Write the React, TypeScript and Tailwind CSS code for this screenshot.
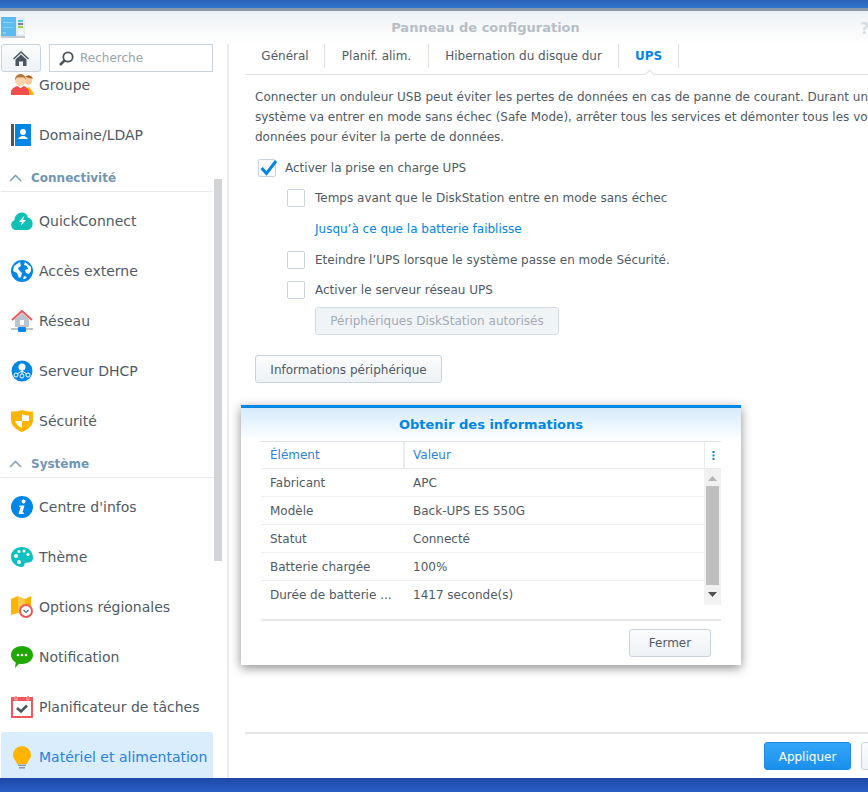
import React from 'react';

const FONT = "font-['DejaVu_Sans',sans-serif]";

const GroupIcon = () => (
    <svg width="23" height="22" viewBox="0 0 23 22">
        <circle cx="17.500" cy="7" r="3.500" fill="#fcc79a" />
        <path d="M14 3a4.500 4.500 0 0 1 8 2l-4-1z" fill="#a8641f" />
        <path d="M14 21v-5l4-3 4 5 1 3z" fill="#ffb400" />
        <circle cx="9.500" cy="6.500" r="5.500" fill="#fdd4ad" />
        <path d="M4 6c0-8 11-8 11 0l-2-2.500H6z" fill="#b5793f" />
        <path d="M0 21v-4c1-3 4-4 6-5l3.500 2 3.500-2c2 1 4 2 5 5v4z" fill="#f04d4d" />
    </svg>
);

const DomainIcon = () => (
    <svg width="22" height="22" viewBox="0 0 22 22">
        <rect x="0" y="0" width="3" height="22" fill="#4a5560" />
        <rect x="4" y="0" width="16" height="22" fill="#0086e5" />
        <circle cx="12" cy="8" r="3" fill="#fff" />
        <path d="M7 15c1-2 3-2.500 3.500-3h3c.5.5 2.500 1 3.500 3z" fill="#fff" />
    </svg>
);

const QuickConnectIcon = () => (
    <svg width="22" height="19" viewBox="0 0 22 19">
        <path d="M5 18a5 5 0 0 1-1.500-9.700C3 3 10-2 15 2c1.300 1 1.800 2.500 1.800 3.500A6.500 6.500 0 0 1 17 18z" fill="#0fc0b5" />
        <path d="M13.500 3.500l-5.500 6.500h3l-1.500 4 5.500-6h-3z" fill="#fff" />
    </svg>
);

const GlobeIcon = () => (
    <svg width="22" height="22" viewBox="0 0 22 22">
        <circle cx="11" cy="11" r="11" fill="#0086e5" />
        <path d="M9 2L3 6l-1 5 4 2 2 5 2-1 1-4-3-3-1-2 3-2z" fill="#fff" />
        <path d="M14 2l-1 3 3 1 1 3-3 1 1 3 3 1 2-3V7zM13 16l-1 3 2 0 2-2z" fill="#fff" />
    </svg>
);

const NetworkIcon = () => (
    <svg width="22" height="22" viewBox="0 0 22 22">
        <path d="M4 9l7-6 7 6v8H4z" fill="#b9c4cf" />
        <path d="M1 10l10-9 10 9" fill="none" stroke="#f0565a" strokeWidth="2" />
        <rect x="9" y="10" width="4" height="5" fill="#fff" />
        <rect x="0" y="18" width="22" height="2" fill="#b9c4cf" />
        <rect x="7" y="17" width="8" height="5" rx="1" fill="#0086e5" />
    </svg>
);

const DhcpIcon = () => (
    <svg width="22" height="22" viewBox="0 0 22 22">
        <circle cx="11" cy="11" r="10.500" fill="#0086e5" />
        <circle cx="11" cy="7" r="3.500" fill="#fff" />
        <path d="M11 9v5M11 11l-5 3M11 11l5 3" stroke="#fff" fill="none" />
        <circle cx="5" cy="15" r="2" fill="#0086e5" stroke="#fff" />
        <circle cx="11" cy="16" r="2" fill="#0086e5" stroke="#fff" />
        <circle cx="17" cy="15" r="2" fill="#0086e5" stroke="#fff" />
    </svg>
);

const ShieldIcon = () => (
    <svg width="22" height="22" viewBox="0 0 22 22">
        <path d="M0 1.500c4 0 8 0 11-1.500 3 1.500 7 1.500 11 1.500V10c0 6-6 10-11 12C6 20 0 16 0 10z" fill="#ffb400" />
        <path d="M11 4c2 1 4 1.500 7 1.500V11h-7zM4 11h7v7c-3-1.500-6-3.500-7-7z" fill="#fff" />
    </svg>
);

const InfoIcon = () => (
    <svg width="22" height="22" viewBox="0 0 22 22">
        <circle cx="11" cy="11" r="11" fill="#0086e5" />
        <circle cx="12.500" cy="5.500" r="2" fill="#fff" />
        <path d="M8.500 9.500h5l-2 7h1.500l-.5 1.500H7.500l2-7H8z" fill="#fff" />
    </svg>
);

const ThemeIcon = () => (
    <svg width="22" height="20" viewBox="0 0 22 20">
        <path d="M11 0C4 0 0 4.500 0 10s5 10 11 10c3 0 2-3 3-4s8 1 8-5C22 5 18 0 11 0z" fill="#0fc0c0" />
        <circle cx="5" cy="9" r="2" fill="#fff" />
        <circle cx="8" cy="4.500" r="1.500" fill="#fff" />
        <circle cx="13" cy="4" r="1.500" fill="#fff" />
        <circle cx="17" cy="7.500" r="1.500" fill="#fff" />
        <circle cx="8" cy="15" r="2" fill="#fff" />
    </svg>
);

const RegionIcon = () => (
    <svg width="22" height="22" viewBox="0 0 22 22">
        <path d="M0 3l7-3v17l-7 2z" fill="#ffb400" />
        <path d="M7 0l7 3v13l-7 1z" fill="#ffc94d" />
        <path d="M14 3l6-3v12h-6z" fill="#ffb400" />
        <circle cx="15" cy="15" r="6" fill="#fff" stroke="#f0565a" strokeWidth="2" />
        <path d="M12.500 14l2.500 2.500 2.500-2.500" fill="none" stroke="#5a6a7a" strokeWidth="1.200" />
    </svg>
);

const ChatIcon = () => (
    <svg width="22" height="22" viewBox="0 0 22 22">
        <path d="M11 0c6 0 11 3.800 11 9s-5 9-11 9c-1 0-2 0-3-.3L4 22l.7-5.500C2 15 0 12 0 9c0-5.200 5-9 11-9z" fill="#1ea800" />
        <circle cx="7" cy="9" r="1.300" fill="#fff" />
        <circle cx="11" cy="9" r="1.300" fill="#fff" />
        <circle cx="15" cy="9" r="1.300" fill="#fff" />
    </svg>
);

const TaskIcon = () => (
    <svg width="22" height="22" viewBox="0 0 22 22">
        <rect x="0" y="1" width="22" height="21" fill="#f0565a" />
        <rect x="2" y="5" width="18" height="15" fill="#fff" />
        <rect x="4" y="0" width="2" height="4" fill="#f0565a" stroke="#fff" strokeWidth=".5" />
        <rect x="16" y="0" width="2" height="4" fill="#f0565a" stroke="#fff" strokeWidth=".5" />
        <path d="M6 12l4 3.500 6-6" fill="none" stroke="#4a5560" strokeWidth="2.500" />
    </svg>
);

const BulbIcon = () => (
    <svg width="18" height="23" viewBox="0 0 18 23">
        <path d="M9 0a9 9 0 0 1 9 9c0 4-3 5-4 9H4C3 14 0 13 0 9a9 9 0 0 1 9-9z" fill="#ffb400" />
        <rect x="5" y="18.500" width="8" height="1.500" fill="#8a96a2" />
        <rect x="6" y="21" width="6" height="1.500" fill="#8a96a2" />
    </svg>
);

const Chevron = () => (
    <svg width="13" height="8" viewBox="0 0 13 8" className="ml-[8px] mr-[9px]">
        <path d="M1 7l5.500-5.500L12 7" fill="none" stroke="#7ea3c0" strokeWidth="1.600" />
    </svg>
);

const Row = ({ icon, label, active = false }: { icon: React.ReactNode; label: string; active?: boolean }) => (
    <div className={`flex items-center h-[50px] w-[212px] ml-px rounded-[3px] text-[14px] ${active ? 'bg-[#d9edfd] text-[#2b7fe0]' : 'text-[#505a64]'}`}>
        <span className="w-[38px] shrink-0 flex items-center justify-center pl-[4px]">{icon}</span>
        <span className="whitespace-nowrap pt-px">{label}</span>
    </div>
);

const Section = ({ label }: { label: string }) => (
    <div className="flex items-center h-[32px] w-[212px] ml-px mb-[4px] pt-[5px] border-b border-[#e8ebee] text-[#7195b3] text-[12px] font-bold">
        <Chevron />
        <span>{label}</span>
    </div>
);

const Checkbox = ({ checked = false }: { checked?: boolean }) => (
    <span className="relative w-[18px] h-[18px] shrink-0 border border-[#c8d3de] rounded-[2px] bg-white">
        {checked && (
            <svg width="20" height="18" viewBox="0 0 20 18" className="absolute left-px top-[-1px]">
                <path d="M1.500 9l5 5.500L16 2" fill="none" stroke="#0086e5" strokeWidth="3" />
            </svg>
        )}
    </span>
);

const tabs = [
    { label: 'Général', w: 'w-[80px] pl-px' },
    { label: 'Planif. alim.', w: 'w-[104px]' },
    { label: 'Hibernation du disque dur', w: 'w-[190px]' },
    { label: 'UPS', w: 'w-[60px]', active: true },
];

const rows = [
    ['Fabricant', 'APC'],
    ['Modèle', 'Back-UPS ES 550G'],
    ['Statut', 'Connecté'],
    ['Batterie chargée', '100%'],
    ['Durée de batterie ...', '1417 seconde(s)'],
];

export default function App() {
    return (
        <div className={`relative w-[868px] h-[792px] overflow-hidden flex flex-col bg-white text-[12px] ${FONT}`}>
            <div className="h-[8px] shrink-0 bg-gradient-to-b from-[#2a62b8] to-[#3175cc]" />
            <div className="h-[3px] shrink-0 bg-[#8a97a8]" />

            {/* Title bar */}
            <div className="relative h-[33px] shrink-0 bg-gradient-to-b from-[#eef1f4] to-white flex items-center justify-center">
                <svg width="24" height="21" viewBox="0 0 24 21" className="absolute left-px top-[6px]">
                    <rect x="0" y="0" width="15" height="19" fill="#5cbcf0" />
                    <rect x="15" y="0" width="9" height="19" fill="#e6ebef" />
                    <rect x="0" y="19" width="24" height="2" fill="#c3ccd4" />
                    <rect x="2" y="5" width="10" height="1" fill="#8fd2f5" />
                    <rect x="2" y="10" width="10" height="1" fill="#8fd2f5" />
                    <rect x="2" y="15" width="3" height="2" fill="#8fd2f5" />
                    <rect x="17" y="3" width="5" height="2" fill="#5ac8e0" />
                    <rect x="17" y="6" width="5" height="2" fill="#7b858f" />
                    <rect x="17" y="9" width="5" height="2" fill="#9ccc55" />
                    <circle cx="20" cy="15" r="3" fill="#f8fafb" />
                </svg>
                <span className="font-bold text-[13px] text-[#b7bec6] ml-[103px]">Panneau de configuration</span>
                <span className="absolute right-[-1px] top-[7px] font-bold text-[15px] text-[#d8dde2]">?</span>
            </div>

            {/* Main */}
            <div className="flex flex-1 min-h-0">
                {/* Sidebar */}
                <aside className="relative w-[229px] shrink-0 border-r-2 border-[#e8eaec] flex flex-col overflow-hidden">
                    <div className="flex h-[28px] shrink-0 ml-px gap-[8px]">
                        <div className="w-[40px] h-[28px] border border-[#c8d3de] rounded-[3px] bg-gradient-to-b from-[#fbfcfd] to-[#eef2f6] flex items-center justify-center">
                            <svg width="16" height="15" viewBox="0 0 16 15">
                                <path d="M8 0L0 7.500l1 1L8 2l7 6.500 1-1z" fill="#4a5560" />
                                <path d="M2.500 8.500L8 3.500l5.500 5V15H10v-4.500H6V15H2.500z" fill="#4a5560" />
                            </svg>
                        </div>
                        <div className="w-[164px] h-[28px] border border-[#c8d3de] flex items-center pl-[9px] gap-[6px] text-[#99a3ae]">
                            <svg width="15" height="15" viewBox="0 0 15 15">
                                <circle cx="9" cy="6" r="4.700" fill="none" stroke="#4a5560" strokeWidth="1.800" />
                                <path d="M5.500 9.500L1 14" stroke="#4a5560" strokeWidth="2.500" />
                            </svg>
                            <span>Recherche</span>
                        </div>
                    </div>
                    <div className="flex-1 min-h-0 overflow-hidden">
                        <div className="-mt-[12px]">
                            <Row icon={<GroupIcon />} label="Groupe" />
                            <Row icon={<DomainIcon />} label="Domaine/LDAP" />
                            <Section label="Connectivité" />
                            <Row icon={<QuickConnectIcon />} label="QuickConnect" />
                            <Row icon={<GlobeIcon />} label="Accès externe" />
                            <Row icon={<NetworkIcon />} label="Réseau" />
                            <Row icon={<DhcpIcon />} label="Serveur DHCP" />
                            <Row icon={<ShieldIcon />} label="Sécurité" />
                            <Section label="Système" />
                            <Row icon={<InfoIcon />} label="Centre d'infos" />
                            <Row icon={<ThemeIcon />} label="Thème" />
                            <Row icon={<RegionIcon />} label="Options régionales" />
                            <Row icon={<ChatIcon />} label="Notification" />
                            <Row icon={<TaskIcon />} label="Planificateur de tâches" />
                            <Row icon={<BulbIcon />} label="Matériel et alimentation" active />
                        </div>
                    </div>
                    {/* Scrollbar thumb */}
                    <div className="absolute left-[214px] top-[135px] w-[8px] h-[382px] bg-[#d2d4d7]" />
                </aside>

                {/* Content */}
                <main className="flex-1 min-w-0 flex flex-col pl-[16px] overflow-hidden text-[#505a64]">
                    <div className="relative flex h-[31px] shrink-0 border-b border-[#dde2e7]">
                        {tabs.map(tab => (
                            <div
                                key={tab.label}
                                className={`h-[24px] flex items-center justify-center border-r border-[#dde2e7] whitespace-nowrap ${tab.w} ${tab.active ? 'text-[#0086e5] font-bold' : ''}`}
                            >
                                {tab.label}
                            </div>
                        ))}
                        <span className="absolute left-[401px] bottom-[-4px] w-[7px] h-[7px] rotate-45 bg-white border-l border-t border-[#dde2e7]" />
                    </div>

                    <div className="flex-1 min-h-0 pl-[10px] pt-[12px]">
                        <p className="leading-[20px] whitespace-nowrap">Connecter un onduleur USB peut éviter les pertes de données en cas de panne de courant. Durant une panne</p>
                        <p className="leading-[20px] whitespace-nowrap">système va entrer en mode sans échec (Safe Mode), arrêter tous les services et démonter tous les volumes de</p>
                        <p className="leading-[20px] whitespace-nowrap">données pour éviter la perte de données.</p>

                        <div className="flex items-center gap-[9px] ml-[3px] mt-[11px] h-[20px]">
                            <Checkbox checked />
                            <span>Activer la prise en charge UPS</span>
                        </div>
                        <div className="flex items-center gap-[10px] ml-[32px] mt-[10px] h-[20px]">
                            <Checkbox />
                            <span>Temps avant que le DiskStation entre en mode sans échec</span>
                        </div>
                        <div className="ml-[60px] mt-[11px] h-[20px] leading-[20px] text-[#0086e5]">Jusqu’à ce que la batterie faiblisse</div>
                        <div className="flex items-center gap-[10px] ml-[32px] mt-[11px] h-[20px]">
                            <Checkbox />
                            <span>Eteindre l’UPS lorsque le système passe en mode Sécurité.</span>
                        </div>
                        <div className="flex items-center gap-[10px] ml-[32px] mt-[10px] h-[20px]">
                            <Checkbox />
                            <span>Activer le serveur réseau UPS</span>
                        </div>
                        <button className="block ml-[60px] mt-[7px] w-[244px] h-[28px] border border-[#d5dce3] rounded-[3px] bg-[#f1f4f7] text-[#a3abb4]">
                            Périphériques DiskStation autorisés
                        </button>
                        <button className="block mt-[20px] pt-px w-[187px] h-[28px] border border-[#c8d3de] rounded-[3px] bg-gradient-to-b from-[#fbfcfd] to-[#eef2f6]">
                            Informations périphérique
                        </button>
                    </div>

                    <div className="h-[46px] shrink-0 border-t-2 border-[#e4e6e8] flex items-start pt-[8px] pl-[519px] gap-[10px]">
                        <button className="w-[87px] h-[28px] pt-px shrink-0 rounded-[3px] border border-[#1a8ce0] bg-gradient-to-b from-[#33a6fb] to-[#1a8fec] text-white">
                            Appliquer
                        </button>
                        <button className="w-[87px] h-[28px] shrink-0 rounded-[3px] border border-[#c8d3de] bg-gradient-to-b from-[#fbfcfd] to-[#eef2f6]" />
                    </div>
                </main>
            </div>

            <div className="h-[14px] shrink-0 bg-gradient-to-b from-[#1d48a8] to-[#2a5ec4]" />

            {/* Dialog */}
            <div className="absolute left-[241px] top-[405px] w-[500px] h-[260px] bg-white border-t-[3px] border-[#0086e5] shadow-[0_3px_10px_rgba(0,0,0,0.45)] text-[#505a64] flex flex-col">
                <div className="h-[33px] shrink-0 bg-gradient-to-b from-[#d5ebfb] to-white flex items-center justify-center font-bold text-[13px] text-[#0086e5]">
                    Obtenir des informations
                </div>
                <div className="mx-[20px] border-t border-[#dde2e7]">
                    <div className="flex h-[27px] border-b border-[#e8ebee] text-[#2b7fe0]">
                        <div className="w-[144px] flex items-center pl-[9px] border-r-2 border-[#e8ebee]">Élément</div>
                        <div className="w-[300px] flex items-center pl-[8px] border-r border-[#e8ebee]">Valeur</div>
                        <div className="flex-1 flex items-center justify-center">
                            <svg width="3" height="9" viewBox="0 0 3 9">
                                <rect x="0.500" y="0" width="2" height="2" fill="#0086e5" />
                                <rect x="0.500" y="3.500" width="2" height="2" fill="#0086e5" />
                                <rect x="0.500" y="7" width="2" height="2" fill="#0086e5" />
                            </svg>
                        </div>
                    </div>
                    <div className="flex h-[136px]">
                        <div className="w-[443px]">
                            {rows.map(([name, value], i) => (
                                <div key={name} className={`flex items-center h-[28px] ${i < rows.length - 1 ? 'border-b border-[#eef0f2]' : ''}`}>
                                    <span className="w-[152px] pl-[9px] whitespace-nowrap">{name}</span>
                                    <span>{value}</span>
                                </div>
                            ))}
                        </div>
                        <div className="flex-1 bg-[#f1f1f1] flex flex-col items-center">
                            <svg width="9" height="5" viewBox="0 0 9 5" className="mt-[7px]"><path d="M0 5l4.500-5L9 5z" fill="#b4b4b4" /></svg>
                            <div className="w-[13px] h-[99px] mt-[5px] bg-[#bfbfbf]" />
                            <svg width="9" height="5" viewBox="0 0 9 5" className="mt-[7px]"><path d="M0 0l4.500 5L9 0z" fill="#505050" /></svg>
                        </div>
                    </div>
                    <div className="mt-[14px] border-t-2 border-[#e6e8ea] pt-[8px] flex justify-end pr-[10px]">
                        <button className="w-[82px] h-[28px] border border-[#c8d3de] rounded-[3px] bg-gradient-to-b from-[#fbfcfd] to-[#eef2f6]">Fermer</button>
                    </div>
                </div>
            </div>
        </div>
    );
}
